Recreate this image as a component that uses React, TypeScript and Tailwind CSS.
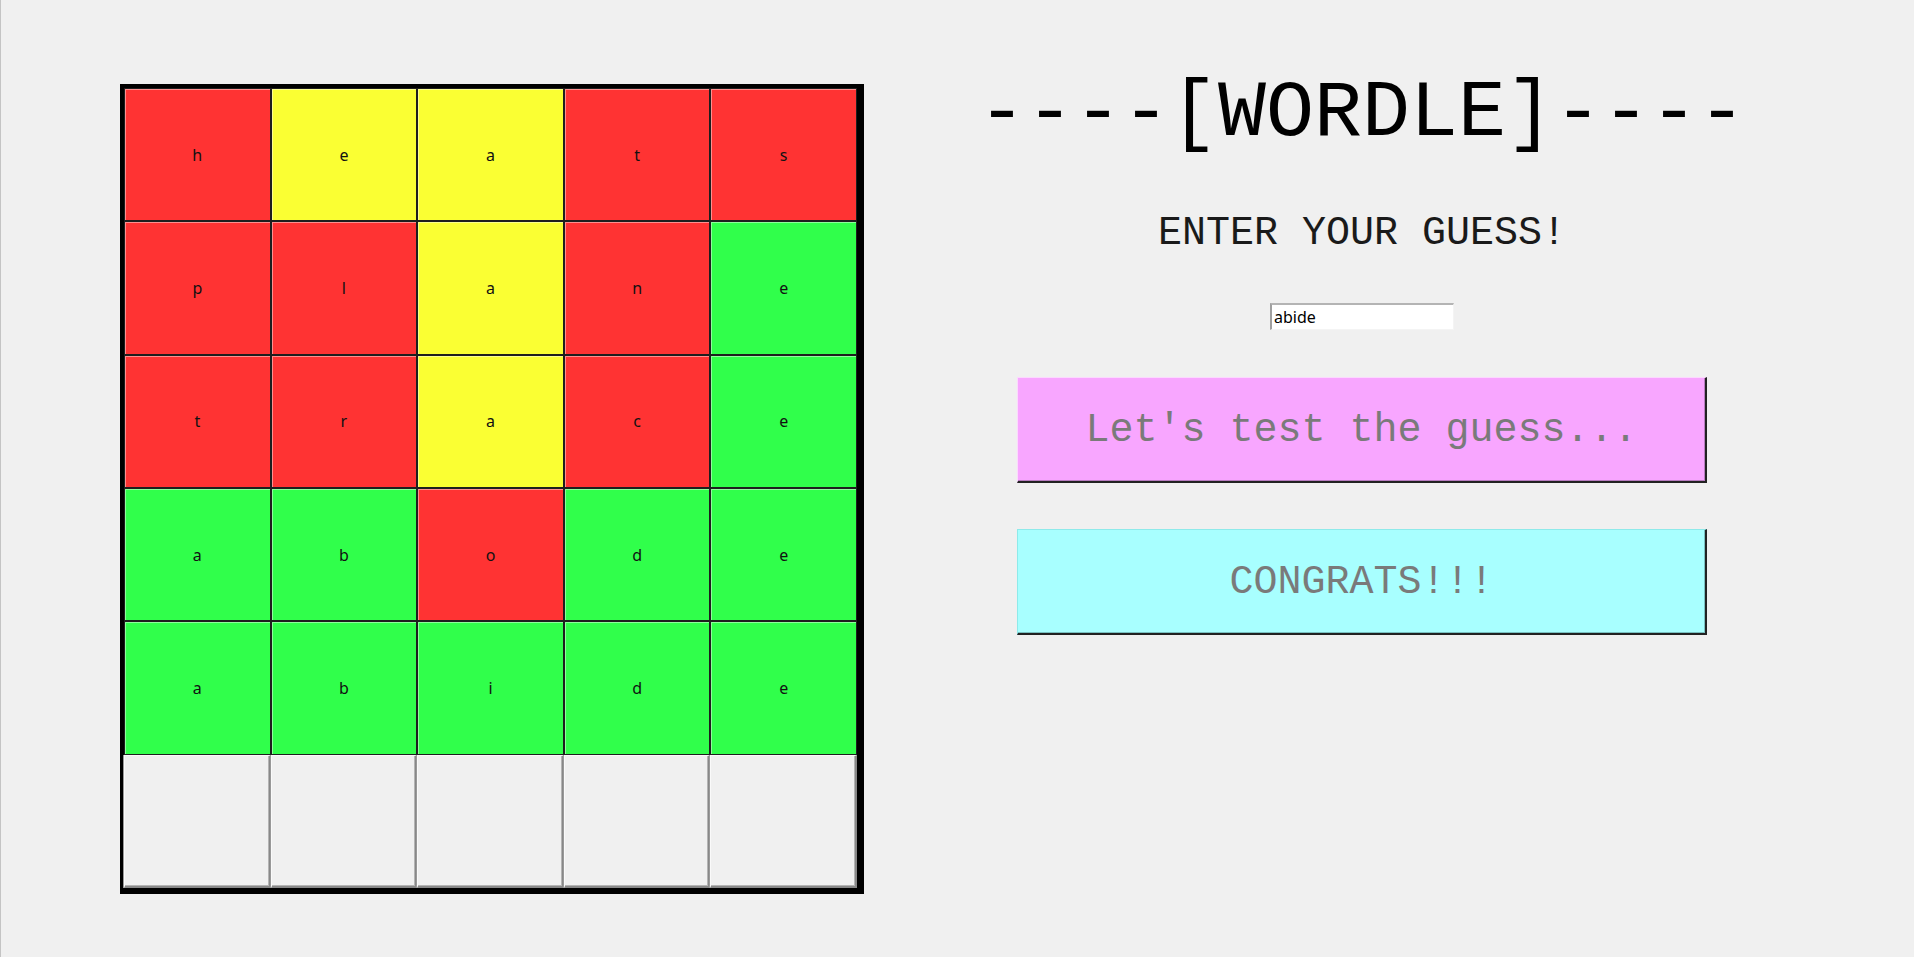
import React from 'react';

type Tile = { ch: string; c: 'r' | 'y' | 'g' | '' };

// guesses so far, last row is still empty
const BOARD: Tile[][] = [
  [{ ch: 'h', c: 'r' }, { ch: 'e', c: 'y' }, { ch: 'a', c: 'y' }, { ch: 't', c: 'r' }, { ch: 's', c: 'r' }],
  [{ ch: 'p', c: 'r' }, { ch: 'l', c: 'r' }, { ch: 'a', c: 'y' }, { ch: 'n', c: 'r' }, { ch: 'e', c: 'g' }],
  [{ ch: 't', c: 'r' }, { ch: 'r', c: 'r' }, { ch: 'a', c: 'y' }, { ch: 'c', c: 'r' }, { ch: 'e', c: 'g' }],
  [{ ch: 'a', c: 'g' }, { ch: 'b', c: 'g' }, { ch: 'o', c: 'r' }, { ch: 'd', c: 'g' }, { ch: 'e', c: 'g' }],
  [{ ch: 'a', c: 'g' }, { ch: 'b', c: 'g' }, { ch: 'i', c: 'g' }, { ch: 'd', c: 'g' }, { ch: 'e', c: 'g' }],
  [{ ch: '', c: '' }, { ch: '', c: '' }, { ch: '', c: '' }, { ch: '', c: '' }, { ch: '', c: '' }],
];

const tileBg = {
  r: 'bg-[#ff3333]',
  y: 'bg-[#faff33]',
  g: 'bg-[#30ff4b]',
};

function Cell({ tile }: { tile: Tile }) {
  if (!tile.c) {
    return (
      <div className="border-t border-l border-t-[#fafafa] border-l-[#fafafa] border-r-2 border-b-2 border-r-[#888] border-b-[#888] bg-[#f0f0f0] shadow-[-1px_0_0_#999,inset_-1px_-1px_0_#b4b4b4]" />
    );
  }
  return (
    <div
      className={`${tileBg[tile.c]} flex items-center justify-center border border-[#1e1e1e] shadow-[inset_1px_1px_0_rgba(255,255,255,0.45)] font-['Noto_Sans',sans-serif] text-[16px] text-[#111]`}
    >
      {tile.ch}
    </div>
  );
}

export default function App() {
  return (
    <div className="min-h-screen w-full bg-[#f0f0f0] border-l border-[#c4c4c4] flex items-start pl-[119px] pt-[72px]">
      {/* board */}
      <div className="mt-[12px] border-l-4 border-t-4 border-r-[7px] border-b-[6px] border-black">
        <div className="grid grid-cols-5 grid-rows-6 w-[733px] h-[800px]">
          {BOARD.map((row, i) => row.map((t, j) => <Cell key={`${i}-${j}`} tile={t} />))}
        </div>
      </div>

      {/* controls */}
      <div className="ml-[120px] w-[756px] flex flex-col items-center font-['Liberation_Mono','Courier_New',monospace]">
        <h1 className="mt-[2px] text-[80px] leading-none whitespace-pre text-black">----[WORDLE]----</h1>

        <p className="mt-[60px] text-[40px] leading-none whitespace-pre text-[#1a1a1a]">ENTER YOUR GUESS!</p>

        <input
          readOnly
          defaultValue="abide"
          className="mt-[49px] w-[184px] h-[27px] bg-white px-0.5 outline-none border-t-2 border-l-2 border-t-[#b4b4b4] border-l-[#a0a0a0] border-r border-b border-r-[#f4f4f4] border-b-[#f4f4f4] font-['Noto_Sans',sans-serif] text-[16px] text-black"
        />

        <button className="mt-[47px] w-[690px] h-[106px] flex items-center justify-center pt-[3px] bg-[#f8a6ff] border-t border-l border-t-[#fcd8ff] border-l-[#fcd8ff] border-r-2 border-b-2 border-r-[#222] border-b-[#222] shadow-[inset_-1px_-1px_0_#b87cc0] text-[40px] leading-none whitespace-pre text-[#7a7a7a]">
          Let's test the guess...
        </button>

        <button className="mt-[46px] w-[690px] h-[106px] flex items-center justify-center pt-[3px] bg-[#a8ffff] border-t border-l border-t-[#8eeaea] border-l-[#8eeaea] border-r-2 border-b-2 border-r-[#222] border-b-[#222] shadow-[inset_-1px_-1px_0_#78c0c0] text-[40px] leading-none whitespace-pre text-[#7a7a7a]">
          CONGRATS!!!
        </button>
      </div>
    </div>
  );
}
